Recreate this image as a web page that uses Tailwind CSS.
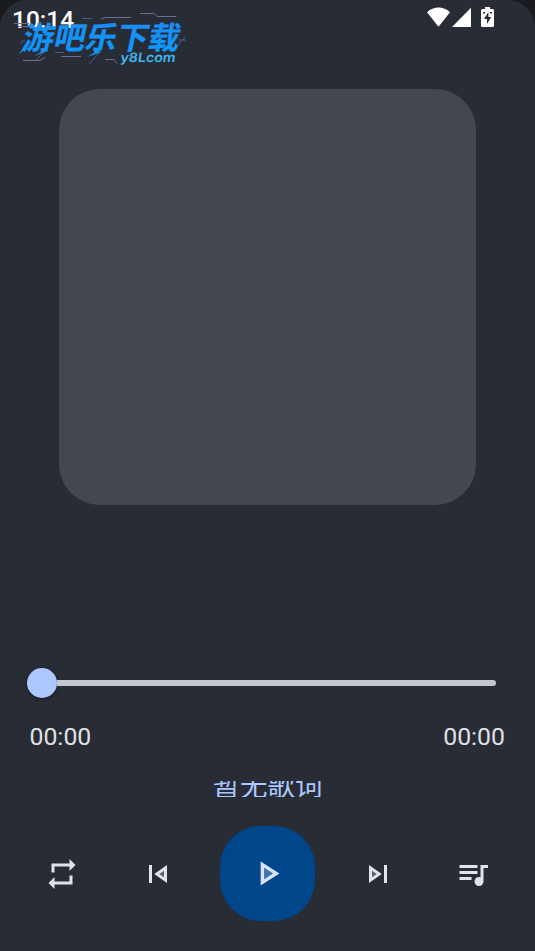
<!DOCTYPE html>
<html lang="zh-CN">
<head>
<meta charset="utf-8">
<title>音乐播放器</title>
<script src="https://cdn.jsdelivr.net/npm/@tailwindcss/browser@4"></script>
</head>
<body class="bg-[#1a1b1f] font-['Roboto','Noto_Sans_CJK_SC',sans-serif]">
<main class="relative flex h-[951px] w-[535px] flex-col overflow-hidden rounded-t-[27px] bg-[#282c34]">
  <header class="flex h-[89px] shrink-0 items-start justify-between pt-[6px] pr-[41px] pl-[12px]">
    <span class="text-[24.500px] leading-[27px] font-medium text-white">10:14</span>
    <div class="flex items-start gap-[2px] pt-[1px]">
      <svg class="h-[20px] w-[23px]" viewBox="0 0 23 20" fill="white"><path d="M0 5.2C7-1 16-1 23 5.2L11.5 19.8Z"/></svg>
      <svg class="h-[20px] w-[19px]" viewBox="0 0 19 20" fill="white"><path d="M19 .8V20H0Z"/></svg>
      <svg class="ml-[8px] h-[20px] w-[13px]" viewBox="0 0 13 20"><path fill="white" d="M4 0h5v2h2.500Q13 2 13 3.500v15Q13 20 11.500 20h-10Q0 20 0 18.500v-15Q0 2 1.500 2H4Z"/><path fill="#282c34" d="M7.400 5 3 12h3v5l4.200-7H7.400ZM2 5h2v1.500H2zM9 5h2v1.500H9z"/></svg>
    </div>
  </header>

  <div class="absolute top-0 left-0 h-[80px] w-[200px]">
    <svg class="absolute inset-0" width="200" height="80" fill="none" stroke-width="1">
      <g stroke="#716b8e"><path d="M14 23.500h15M18 26.500h16M101 19l4-1.500h26M140 13.500h14l4 3.500M158 16.500h18M61 56.500h20M23 60.500h17l5-3M105 59.500h9l3 4"/></g>
      <g stroke="#4d5d8c"><path d="M20 43l5-3M89 64l12-13M82 18.500h10M36 60l7-7M177 46l8-9M55 52.500h9M178 40h8"/></g>
    </svg>
    <svg class="absolute inset-0" width="200" height="80">
      <defs><linearGradient id="brand" x1="0" y1="0" x2="0" y2="1"><stop stop-color="#2387ee"/><stop offset="1" stop-color="#089cff"/></linearGradient></defs>
      <g transform="translate(21 49) skewX(-12)">
        <text font-family="Noto Sans CJK SC, sans-serif" font-weight="700" font-size="31" fill="url(#brand)" stroke="#168fed" stroke-width=".3" textLength="157" lengthAdjust="spacingAndGlyphs">游吧乐下载</text>
      </g>
      <path fill="#168fed" d="M27 42 19 54l8-6ZM47 48 34 56l14-5ZM100 49 87 57l12-4Z"/>
      <g transform="translate(120 61.500) skewX(-8)">
        <text font-family="Inter, sans-serif" font-weight="600" font-size="13" fill="#3cb7f2" textLength="55" lengthAdjust="spacingAndGlyphs">y8Lcom</text>
      </g>
    </svg>
  </div>

  <section class="ml-[59px] h-[416px] w-[416.500px] shrink-0 rounded-[41px] bg-[#45474f]"></section>

  <section class="mt-[162px] flex h-[31px] shrink-0 items-center pr-[39px] pl-[26.500px]">
    <div class="h-[30px] w-[30px] shrink-0 rounded-full bg-[#adc7ff] shadow-[0_1px_3px_rgba(0,0,0,0.4)]"></div>
    <div class="h-[6px] flex-1 rounded-r-full bg-[#c4c6d0]"></div>
  </section>

  <div class="mt-[24px] flex h-[30px] shrink-0 items-center justify-between pr-[30px] pl-[29.500px] text-[24.800px] leading-[30px] text-[#e0e0e4]">
    <span>00:00</span><span>00:00</span>
  </div>

  <div class="mt-[29px] flex h-[16px] shrink-0 items-center justify-center overflow-hidden text-[27.500px] leading-[40px] text-[#adc7ff]"><span class="-mt-[4px]">暂无歌词</span></div>

  <nav class="mt-[29px] flex h-[95px] shrink-0 items-center justify-between px-[44px] text-[#e3e2e6]">
    <svg class="h-[36px] w-[36px]" viewBox="0 0 24 24" fill="currentColor"><path d="M7 7h10v3l4-4-4-4v3H5v6h2V7zm10 10H7v-3l-4 4 4 4v-3h12v-6h-2v4z"/></svg>
    <svg class="ml-[15px] h-[36px] w-[36px]" viewBox="0 0 24 24" fill="currentColor"><path fill-opacity=".3" d="M16 14.140V9.860L12.970 12z"/><path d="M6 6h2v12H6zm3.500 6 8.500 6V6l-8.500 6zm6.500 2.140L12.970 12 16 9.860v4.280z"/></svg>
    <div class="flex h-[95px] w-[95px] items-center justify-center rounded-[41px] bg-[#00468b] text-[#d8e2ff]">
      <svg class="h-[41px] w-[41px]" viewBox="0 0 24 24" fill="currentColor"><path fill-opacity=".3" d="M10 8.640v6.720L15.270 12z"/><path d="m8 19 11-7L8 5v14zm2-10.360L15.270 12 10 15.360V8.640z"/></svg>
    </div>
    <svg class="mr-[15px] h-[36px] w-[36px]" viewBox="0 0 24 24" fill="currentColor"><path fill-opacity=".3" d="M8 9.860v4.280L11.030 12z"/><path d="m6 18 8.500-6L6 6v12zm2-8.140L11.030 12 8 14.140V9.860zM16 6h2v12h-2z"/></svg>
    <svg class="h-[36px] w-[36px]" viewBox="0 0 24 24" fill="currentColor"><path d="M15 6H3v2h12V6zm0 4H3v2h12v-2zM3 16h8v-2H3v2zM17 6v8.180c-.310-.110-.650-.180-1-.180-1.660 0-3 1.340-3 3s1.340 3 3 3 3-1.340 3-3V8h3V6h-5z"/></svg>
  </nav>
</main>
</body>
</html>
